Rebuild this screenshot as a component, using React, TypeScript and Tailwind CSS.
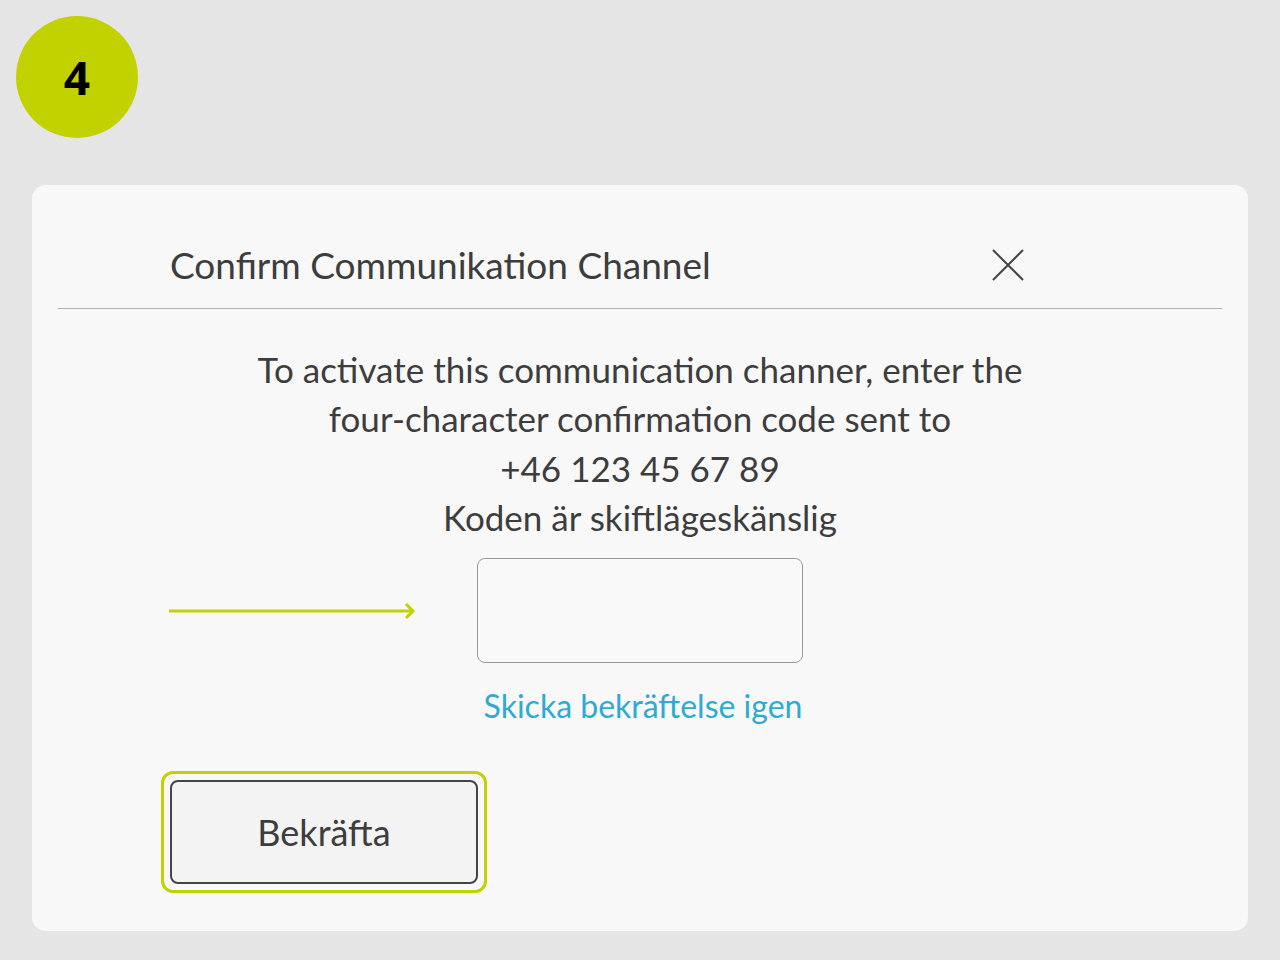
import React from "react";

export default function App() {
  return (
    <div className="w-[1280px] h-[960px] bg-[#e5e5e5] flex flex-col overflow-hidden" style={{ fontFamily: "Lato, 'Noto Sans', sans-serif" }}>
      <div className="mt-[16px] ml-[16px] w-[122px] h-[122px] rounded-full bg-[#c2d100] flex items-center justify-center">
        <span className="text-[46px] font-bold text-black leading-none" style={{ fontFamily: "'Open Sans', Lato, sans-serif" }}>4</span>
      </div>
      <div className="mt-[47px] mx-[32px] h-[746px] rounded-[14px] bg-[#f8f8f8] flex flex-col">
        <div className="h-[123px] pt-[58px] pl-[138px] flex items-start">
          <div className="w-[822px] text-[37px] leading-[44px] text-[#3d3d3d]">Confirm Communikation Channel</div>
          <div className="mt-[6px]">
            <svg width="32" height="32" viewBox="0 0 32 32">
              <path d="M1 1 L31 31 M31 1 L1 31" stroke="#444" strokeWidth="2" fill="none" />
            </svg>
          </div>
        </div>
        <div className="mx-[26px] h-px bg-[#b3b3b3]" />
        <div className="mt-[36px] flex flex-col items-center text-center text-[35px] leading-[49.3px] text-[#3d3d3d]">
          <div>To activate this communication channer, enter the</div>
          <div>four-character confirmation code sent to</div>
          <div>+46 123 45 67 89</div>
          <div>Koden är skiftlägeskänslig</div>
        </div>
        <div className="mt-[16px] pl-[137px] flex items-center">
          <svg width="248" height="20" viewBox="0 0 248 20">
            <path d="M0 10 L244 10" stroke="#c2d100" strokeWidth="3" fill="none" />
            <path d="M237 3 L244 10 L237 17" stroke="#c2d100" strokeWidth="3" fill="none" />
          </svg>
          <div className="ml-[60px] w-[326px] h-[105px] rounded-[8px] border border-[#999] bg-[#f9f9f9]" />
        </div>
        <div className="mt-[18px] text-center pl-[6px] text-[32px] leading-[49.5px] text-[#2eaad3]">Skicka bekräftelse igen</div>
        <div className="mt-[40px] ml-[129px] w-[326px] h-[122px] rounded-[12px] border-[3px] border-[#c2d100] p-[6px]">
          <div className="w-full h-full rounded-[8px] border-2 border-[#444] bg-[#f3f3f3] flex items-center justify-center text-[36px] text-[#3d3d3d]">
            Bekräfta
          </div>
        </div>
      </div>
    </div>
  );
}
